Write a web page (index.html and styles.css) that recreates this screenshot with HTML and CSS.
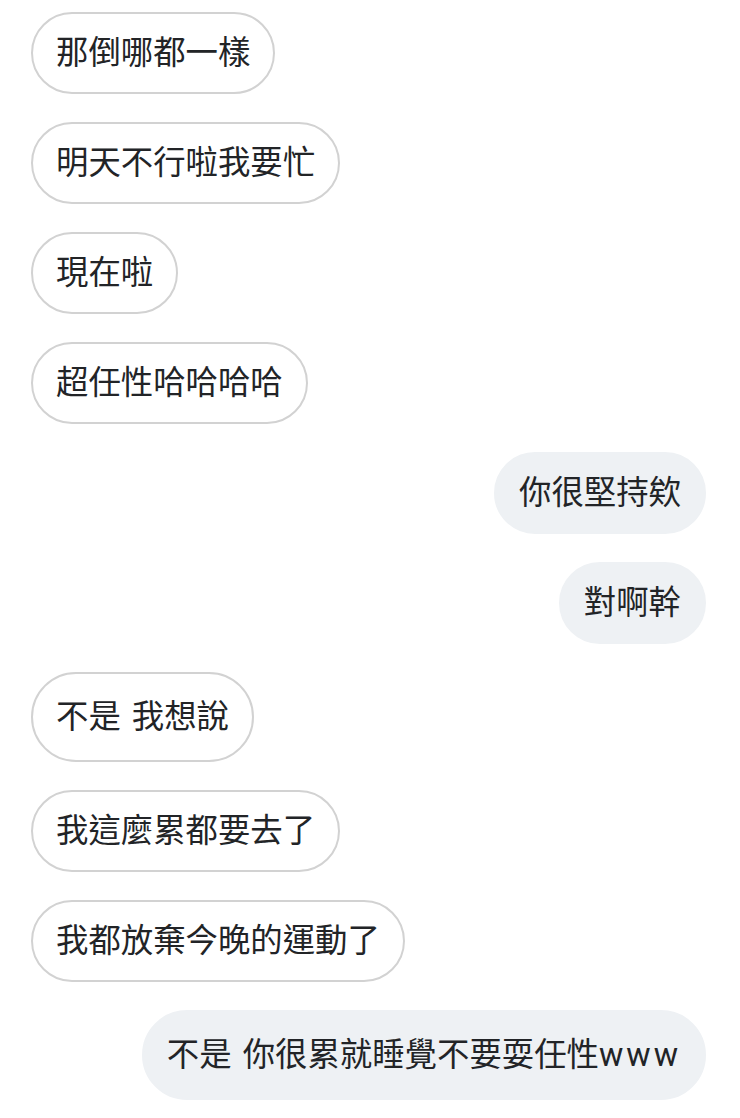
FILE: index.html
```html
<!DOCTYPE html>
<html lang="zh-Hant">
<head>
<meta charset="utf-8">
<title>Chat</title>
<link rel="stylesheet" href="styles.css">
</head>
<body>
<div class="chat">
  <div class="msg in"><span class="bubble">那倒哪都一樣</span></div>
  <div class="msg in"><span class="bubble">明天不行啦我要忙</span></div>
  <div class="msg in"><span class="bubble">現在啦</span></div>
  <div class="msg in"><span class="bubble">超任性哈哈哈哈</span></div>
  <div class="msg out"><span class="bubble">你很堅持欸</span></div>
  <div class="msg out"><span class="bubble">對啊幹</span></div>
  <div class="msg in"><span class="bubble mixed">不是 我想說</span></div>
  <div class="msg in"><span class="bubble">我這麼累都要去了</span></div>
  <div class="msg in"><span class="bubble">我都放棄今晚的運動了</span></div>
  <div class="msg out"><span class="bubble mixed">不是 你很累就睡覺不要耍任性<span class="latin">www</span></span></div>
</div>
</body>
</html>
```

FILE: styles.css
```css
html, body {
  margin: 0;
  padding: 0;
  background: #ffffff;
}

.chat {
  display: flex;
  flex-direction: column;
  gap: 28px;
  padding: 12px 34px 0 31px;
  font-family: Roboto, "Noto Sans CJK TC", sans-serif;
  font-size: 32.4px;
  color: #222427;
}

.msg {
  display: flex;
}

.msg.in {
  justify-content: flex-start;
}

.msg.out {
  justify-content: flex-end;
}

.bubble {
  display: flex;
  align-items: center;
  box-sizing: border-box;
  height: 82px;
  padding: 0 23px;
  border-radius: 45px;
  white-space: pre;
  line-height: 1;
  word-spacing: 3px;
}

.bubble.mixed {
  height: 90px;
}

.msg.in .bubble {
  background: #ffffff;
  border: 2px solid #d2d2d2;
}

.msg.out .bubble {
  background: #eef1f4;
  border: 2px solid #eef1f4;
}

.latin {
  letter-spacing: 3px;
}
```
